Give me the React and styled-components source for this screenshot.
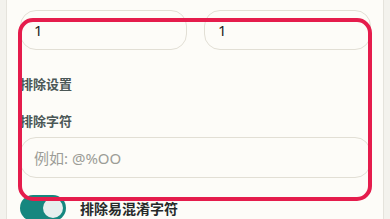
import React from "react";
import styled, { createGlobalStyle } from "styled-components";

const Global = createGlobalStyle`
  html, body { margin: 0; padding: 0; background: #f3f2ed; overflow: hidden; }
  * { box-sizing: border-box; }
  body { font-family: "Noto Sans CJK SC", "Noto Sans", sans-serif; }
`;

const Page = styled.div`
  position: relative;
  height: 219px;
  overflow: hidden;
`;

const Panel = styled.div`
  margin: -15px 0 0 6px;
  width: 378px;
  min-height: 260px;
  background: #fdfcf8;
  border-left: 1px solid #e5e3dc;
  border-right: 1px solid #e5e3dc;
  padding: 0 12px 0 13px;
  display: flex;
  flex-direction: column;
`;

const Grid = styled.div`
  display: grid;
  grid-template-columns: 1fr 1fr;
  column-gap: 17px;
`;

const Field = styled.div`
  display: flex;
  flex-direction: column;
`;

const SmallLabel = styled.div`
  font-size: 13px;
  line-height: 16px;
  height: 16px;
  color: #8b8f88;
  margin-bottom: 9px;
  padding-left: 2px;
`;

const Input = styled.input`
  height: ${(p) => p.$h || 40}px;
  width: 100%;
  border: 1px solid #e2dfd5;
  border-radius: 16px;
  background: #fdfcf8;
  padding: 0 13px;
  font-family: "Noto Sans", "Noto Sans CJK SC", sans-serif;
  font-size: 15px;
  color: #1f2423;
  outline: none;
  &::placeholder { color: #9c9d97; }
`;

const SectionTitle = styled.div`
  font-size: 13px;
  font-weight: 700;
  line-height: 18px;
  color: #4b5756;
  margin-top: ${(p) => p.$mt}px;
  margin-bottom: ${(p) => p.$mb || 0}px;
`;

const ToggleRow = styled.div`
  display: flex;
  align-items: center;
  gap: 14px;
  margin-top: 17px;
`;

const Switch = styled.div`
  position: relative;
  width: 46px;
  height: 26px;
  border-radius: 13px;
  background: #16877f;
  flex-shrink: 0;
`;

const Knob = styled.div`
  position: absolute;
  top: 3px;
  right: 3px;
  width: 20px;
  height: 20px;
  border-radius: 50%;
  background: #e7efee;
`;

const ToggleLabel = styled.span`
  font-size: 14px;
  font-weight: 700;
  color: #262a29;
`;

const Highlight = styled.div`
  position: absolute;
  left: 18px;
  top: 18px;
  width: 354px;
  height: 183px;
  border: 4px solid #e51c4c;
  border-radius: 15px;
  pointer-events: none;
`;

export default function App() {
  return (
    <Page>
      <Global />
      <Panel>
        <Grid>
          <Field>
            <SmallLabel>最少数字个数</SmallLabel>
            <Input defaultValue="1" />
          </Field>
          <Field>
            <SmallLabel>最少符号个数</SmallLabel>
            <Input defaultValue="1" />
          </Field>
        </Grid>
        <SectionTitle $mt={25}>排除设置</SectionTitle>
        <SectionTitle $mt={19} $mb={7}>排除字符</SectionTitle>
        <Input $h={41} placeholder="例如: @%OO" />
        <ToggleRow>
          <Switch>
            <Knob />
          </Switch>
          <ToggleLabel>排除易混淆字符</ToggleLabel>
        </ToggleRow>
      </Panel>
      <Highlight />
    </Page>
  );
}
